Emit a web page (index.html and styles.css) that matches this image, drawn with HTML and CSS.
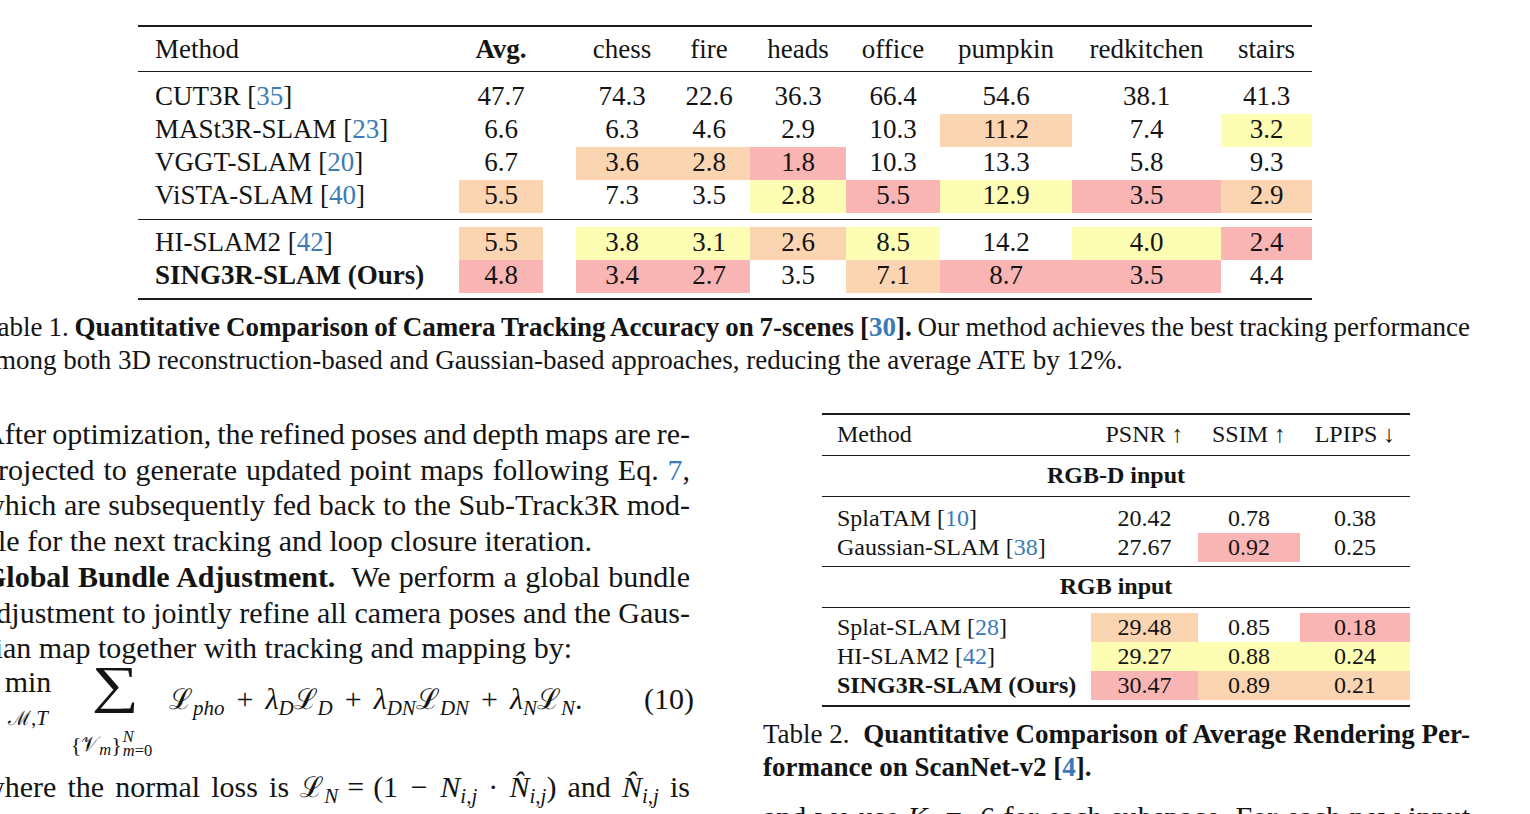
FILE: index.html
```html
<!DOCTYPE html>
<html lang="en">
<head>
<meta charset="utf-8">
<title>SING3R-SLAM tables</title>
<link rel="stylesheet" href="styles.css">
</head>
<body>
<div class="page">
  <div class="sheet">

    <section class="t1">
      <div class="rule thick"></div>
      <div class="row head">
        <div class="m">Method</div><div class="b">Avg.</div><div></div><div>chess</div><div>fire</div><div>heads</div><div>office</div><div>pumpkin</div><div>redkitchen</div><div>stairs</div>
      </div>
      <div class="rule"></div>
      <div class="grp">
        <div class="row"><div class="m">CUT3R [<span class="cite">35</span>]</div><div>47.7</div><div></div><div>74.3</div><div>22.6</div><div>36.3</div><div>66.4</div><div>54.6</div><div>38.1</div><div>41.3</div></div>
        <div class="row"><div class="m">MASt3R-SLAM [<span class="cite">23</span>]</div><div>6.6</div><div></div><div>6.3</div><div>4.6</div><div>2.9</div><div>10.3</div><div class="o">11.2</div><div>7.4</div><div class="y">3.2</div></div>
        <div class="row"><div class="m">VGGT-SLAM [<span class="cite">20</span>]</div><div>6.7</div><div></div><div class="o">3.6</div><div class="o">2.8</div><div class="r">1.8</div><div>10.3</div><div>13.3</div><div>5.8</div><div>9.3</div></div>
        <div class="row"><div class="m">ViSTA-SLAM [<span class="cite">40</span>]</div><div class="o">5.5</div><div></div><div>7.3</div><div>3.5</div><div class="y">2.8</div><div class="r">5.5</div><div class="y">12.9</div><div class="r">3.5</div><div class="o">2.9</div></div>
      </div>
      <div class="rule"></div>
      <div class="grp grp2">
        <div class="row"><div class="m">HI-SLAM2 [<span class="cite">42</span>]</div><div class="o">5.5</div><div></div><div class="y">3.8</div><div class="y">3.1</div><div class="o">2.6</div><div class="y">8.5</div><div>14.2</div><div class="y">4.0</div><div class="r">2.4</div></div>
        <div class="row"><div class="m b">SING3R-SLAM (Ours)</div><div class="r">4.8</div><div></div><div class="r">3.4</div><div class="r">2.7</div><div>3.5</div><div class="o">7.1</div><div class="r">8.7</div><div class="r">3.5</div><div>4.4</div></div>
      </div>
      <div class="rule thick"></div>
    </section>

    <p class="cap cap1">
      <span class="ln">Table 1. <b>Quantitative Comparison of Camera Tracking Accuracy on 7-scenes [<span class="cite">30</span>].</b> Our method achieves the best tracking performance</span>
      <span class="ln end">among both 3D reconstruction-based and Gaussian-based approaches, reducing the average ATE by 12%.</span>
    </p>

    <div class="cols">
      <div class="col left">
        <p class="txt">
          <span class="ln">After optimization, the refined poses and depth maps are re-</span>
          <span class="ln">projected to generate updated point maps following Eq. <span class="cite">7</span>,</span>
          <span class="ln">which are subsequently fed back to the Sub-Track3R mod-</span>
          <span class="ln end">ule for the next tracking and loop closure iteration.</span>
        </p>
        <p class="txt">
          <span class="ln"><b>Global Bundle Adjustment.</b>&nbsp; We perform a global bundle</span>
          <span class="ln">adjustment to jointly refine all camera poses and the Gaus-</span>
          <span class="ln end">sian map together with tracking and mapping by:</span>
        </p>

        <div class="eq">
          <div class="lim lim-min">
            <span class="op">min</span>
            <span class="lim-sub"><i class="cal">ℳ</i>,<i>T</i></span>
          </div>
          <div class="lim lim-sum">
            <span class="sigma">∑</span>
            <span class="lim-sub sum-sub">{<i class="cal">𝒱</i><span class="s2"><i>m</i></span>}<span class="ss"><span class="ss-top"><i>N</i></span><span class="ss-bot"><i>m</i>=0</span></span></span>
          </div>
          <div class="expr">
            <span class="cal">ℒ</span><sub><i>pho</i></sub><span class="bin">+</span><i>λ</i><sub><i>D</i></sub><span class="cal">ℒ</span><sub><i>D</i></sub><span class="bin">+</span><i>λ</i><sub><i>DN</i></sub><span class="cal">ℒ</span><sub><i>DN</i></sub><span class="bin">+</span><i>λ</i><sub><i>N</i></sub><span class="cal">ℒ</span><sub><i>N</i></sub>.
          </div>
          <div class="eqno">(10)</div>
        </div>

        <p class="txt">
          <span class="ln">where the normal loss is <span class="cal">ℒ</span><sub><i>N</i></sub><span class="rel">=</span>(1 <span class="mop">−</span> <i>N</i><sub><i>i,j</i></sub> · <i>N̂</i><sub><i>i,j</i></sub>) and <i>N̂</i><sub><i>i,j</i></sub> is</span>
          <span class="ln">the rendered normal map. This ensures the Gaussian model</span>
        </p>
      </div>

      <div class="col right">
        <section class="t2">
          <div class="rule thick"></div>
          <div class="row head"><div class="m">Method</div><div>PSNR ↑</div><div>SSIM ↑</div><div>LPIPS ↓</div></div>
          <div class="rule"></div>
          <div class="sect">RGB-D input</div>
          <div class="rule"></div>
          <div class="grp">
            <div class="row"><div class="m">SplaTAM [<span class="cite">10</span>]</div><div>20.42</div><div>0.78</div><div>0.38</div></div>
            <div class="row"><div class="m">Gaussian-SLAM [<span class="cite">38</span>]</div><div>27.67</div><div class="r">0.92</div><div>0.25</div></div>
          </div>
          <div class="rule"></div>
          <div class="sect">RGB input</div>
          <div class="rule"></div>
          <div class="grp grp2">
            <div class="row"><div class="m">Splat-SLAM [<span class="cite">28</span>]</div><div class="o">29.48</div><div>0.85</div><div class="r">0.18</div></div>
            <div class="row"><div class="m">HI-SLAM2 [<span class="cite">42</span>]</div><div class="y">29.27</div><div class="y">0.88</div><div class="y">0.24</div></div>
            <div class="row"><div class="m b">SING3R-SLAM (Ours)</div><div class="r">30.47</div><div class="o">0.89</div><div class="o">0.21</div></div>
          </div>
          <div class="rule thick"></div>
        </section>

        <p class="cap cap2">
          <span class="ln">Table 2.&nbsp; <b>Quantitative Comparison of Average Rendering Per-</b></span>
          <span class="ln end"><b>formance on ScanNet-v2 [<span class="cite">4</span>].</b></span>
        </p>

        <p class="txt tail">
          <span class="ln">and we use <i>K</i> <span class="rel">=</span> 6 for each subspace. For each new input</span>
        </p>
      </div>
    </div>

  </div>
</div>
</body>
</html>
```

FILE: styles.css
```css
* {
  box-sizing: border-box;
  margin: 0;
  padding: 0;
}

html, body {
  background: #ffffff;
}

body {
  width: 1530px;
  height: 814px;
  overflow: hidden;
  font-family: "Liberation Serif", "Times New Roman", serif;
  color: #141414;
}

.page {
  width: 1530px;
  height: 814px;
  overflow: hidden;
}

.sheet {
  width: 1487px;
  margin-left: -17px;
  padding-top: 25px;
}

.cite {
  color: #3b7bb8;
}

b, .b {
  font-weight: bold;
}

/* rules */
.rule {
  height: 1px;
  background: #1c1c1c;
}

.rule.thick {
  height: 2px;
}

/* colour cells */
.r { background: #f9b4b4; }
.o { background: #fbd4b2; }
.y { background: #fdfdb3; }

/* Table 1 */
.t1 {
  width: 1174px;
  margin-left: 155px;
  font-size: 27px;
}

.t1 .row {
  display: grid;
  grid-template-columns: 321px 84px 33px 92px 82px 96px 94px 132px 149px 91px;
  height: 33px;
  line-height: 31px;
  padding-bottom: 2px;
  text-align: center;
  white-space: nowrap;
}

.t1 .row > div {
  height: 33px;
}

.t1 .row.head {
  height: 44px;
  line-height: 44px;
  padding-bottom: 0;
}

.t1 .m {
  text-align: left;
  padding-left: 17px;
}

.t1 .grp {
  padding: 9px 0 6px;
}

.t1 .grp2 {
  padding: 7px 0 5px;
}

/* captions */
.cap {
  font-size: 27px;
  line-height: 33px;
}

.cap1 {
  margin-top: 11px;
}

.ln {
  display: block;
  text-align: justify;
  text-align-last: justify;
  white-space: nowrap;
  word-spacing: -2.5px;
}

.ln.end {
  text-align-last: left;
  word-spacing: 0;
}

/* two columns */
.cols {
  display: grid;
  grid-template-columns: 707px 707px;
  column-gap: 73px;
  margin-top: 36px;
}

.col.left {
  padding-top: 3px;
}

.txt {
  font-size: 30px;
  line-height: 35.7px;
}

sub {
  font-size: 0.7em;
  line-height: 0;
  vertical-align: -0.3em;
}

.cal {
  font-family: "DejaVu Serif", "Liberation Serif", serif;
  font-style: normal;
  font-size: 0.95em;
}

.rel {
  margin: 0 0.3em;
  word-spacing: 0;
}

.mop {
  margin: 0 0.05em;
}

/* equation */
.eq {
  height: 103px;
  display: flex;
  align-items: flex-start;
  font-size: 30px;
}

.lim {
  display: flex;
  flex-direction: column;
  align-items: center;
}

.lim-min {
  margin-left: 21px;
  width: 48px;
  margin-top: 1px;
}

.op {
  line-height: 30px;
}

.lim-sub {
  font-size: 21px;
  line-height: 21px;
  white-space: nowrap;
}

.lim-min .lim-sub {
  margin-top: 11px;
}

.lim-sum {
  margin-left: 9px;
  width: 101px;
}

.sigma {
  font-size: 60px;
  line-height: 50px;
  height: 50px;
  margin-top: -6px;
  margin-left: 8px;
  transform: scale(1.1, 0.86);
}

.sum-sub {
  margin-top: 22px;
  font-size: 22px;
  display: flex;
  align-items: center;
}

.s2 {
  font-size: 0.75em;
  align-self: flex-end;
  margin-bottom: -2px;
}

.ss {
  display: inline-flex;
  flex-direction: column;
  font-size: 0.75em;
  line-height: 14px;
  margin-left: 1px;
  margin-top: 4px;
}

.ss-top {
  margin-top: -6px;
}

.expr {
  margin-left: 7px;
  margin-top: 18px;
  line-height: 30px;
  white-space: nowrap;
}

.bin {
  margin: 0 0.4em;
}

.eqno {
  margin-left: auto;
  margin-right: -4px;
  margin-top: 18px;
  line-height: 30px;
}

/* Table 2 */
.t2 {
  width: 588px;
  margin-left: 59px;
  font-size: 24px;
}

.t2 .row {
  display: grid;
  grid-template-columns: 269px 107px 102px 110px;
  height: 29px;
  line-height: 28px;
  text-align: center;
  white-space: nowrap;
}

.t2 .row > div {
  height: 29px;
}

.t2 .row.head {
  height: 40px;
  line-height: 38px;
}

.t2 .m {
  text-align: left;
  padding-left: 15px;
}

.t2 .sect {
  height: 40px;
  line-height: 38px;
  text-align: center;
  font-weight: bold;
}

.t2 .grp {
  padding: 7px 0 4px;
}

.t2 .grp2 {
  padding: 5px 0 5px;
}

.cap2 {
  margin-top: 11px;
}

.tail {
  margin-top: 15px;
}
```
